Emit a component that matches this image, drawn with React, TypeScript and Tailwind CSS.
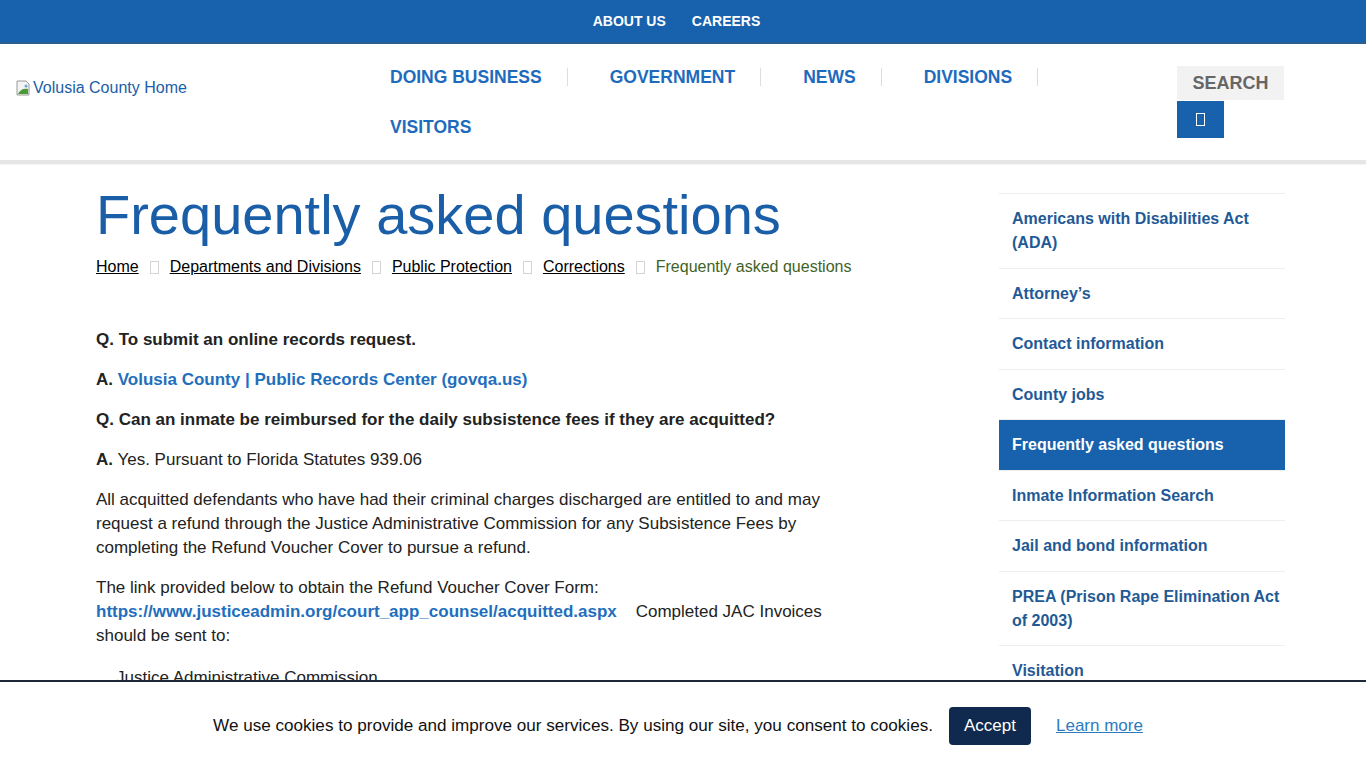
import React from 'react'

const navItems = ['DOING BUSINESS', 'GOVERNMENT', 'NEWS', 'DIVISIONS', 'VISITORS']

const sideLinks = [
  'Americans with Disabilities Act (ADA)',
  'Attorney’s',
  'Contact information',
  'County jobs',
  'Frequently asked questions',
  'Inmate Information Search',
  'Jail and bond information',
  'PREA (Prison Rape Elimination Act of 2003)',
  'Visitation',
  'Volunteer opportunities',
]

const crumbs = ['Home', 'Departments and Divisions', 'Public Protection', 'Corrections']

// missing icon-font glyph, shown as an empty box
const Tofu = ({ className }: { className?: string }) => (
  <span className={`inline-block w-[9px] h-[13px] border border-current ${className ?? ''}`} />
)

const App: React.FC = () => {
  return (
    <div className="min-h-screen bg-white font-['Liberation_Sans',Arial,sans-serif] text-[#333]">
      {/* top utility bar */}
      <div className="h-[44px] bg-[#1761ad] border-b-2 border-[#2b5d8f] flex justify-center items-center gap-[26px] pr-[13px] pt-[1px]">
        <a className="text-white font-bold text-[14px]">ABOUT US</a>
        <a className="text-white font-bold text-[14px]">CAREERS</a>
      </div>

      {/* header */}
      <header className="h-[120px] flex border-b-4 border-[#e6e6e6]">
        <div className="w-[390px] pl-4 pt-[32px]">
          <a className="flex items-center text-[16px] text-[#1a5ea8]">
            <svg width="16" height="16" viewBox="0 0 16 16" className="mr-[1px]">
              <path d="M1 1h9l3 3v11H1z" fill="#f4f4f4" stroke="#9a9a9a" />
              <path d="M2 14c2-4 5-6 10-5v5z" fill="#4c9a36" />
              <circle cx="10" cy="6" r="1.5" fill="#6ba6d6" />
            </svg>
            Volusia County Home
          </a>
        </div>
        <nav className="w-[720px] flex flex-wrap content-start pt-[8px]">
          {navItems.map((item, i) => (
            <div key={item} className="h-[50px] flex items-center">
              <a className={`text-[17.5px] font-bold text-[#1e6bbd] ${i > 0 && i < 4 ? 'ml-[42px]' : ''}`}>{item}</a>
              {i < 4 && <span className="ml-[25px] w-px h-[18px] bg-[#dddddd]" />}
            </div>
          ))}
        </nav>
        <div className="ml-auto mr-[82px] pt-[22px]">
          <div className="w-[107px] h-[34px] bg-[#f2f2f2] flex items-center justify-center text-[18px] font-bold text-[#666]">
            SEARCH
          </div>
          <button className="mt-px w-[47px] h-[37px] bg-[#1761ad] flex items-center justify-center text-white">
            <Tofu />
          </button>
        </div>
      </header>
      <div className="h-px bg-[#f4f4f4]" />

      {/* main */}
      <main className="flex pl-[96px] pt-[20px]">
        <div className="w-[764px]">
          <h1 className="text-[56px] leading-[60px] text-[#1a5ea8]">Frequently asked questions</h1>
          <div className="mt-[10px] flex items-center text-[16px] leading-6">
            {crumbs.map(c => (
              <React.Fragment key={c}>
                <a className="text-black underline">{c}</a>
                <Tofu className="mx-[11px] text-[#d4d4d4] h-[11px] w-[8px]" />
              </React.Fragment>
            ))}
            <span className="text-[#3f6326]">Frequently asked questions</span>
          </div>

          <div className="mt-[49px] w-[760px] text-[17px] leading-6 text-[#222] space-y-4">
            <p className="font-bold">Q. To submit an online records request.</p>
            <p>
              <b>A.</b> <a className="font-bold text-[#1f6fbd]">Volusia County | Public Records Center (govqa.us)</a>
            </p>
            <p className="font-bold">Q. Can an inmate be reimbursed for the daily subsistence fees if they are acquitted?</p>
            <p>
              <b>A.</b> Yes. Pursuant to Florida Statutes 939.06
            </p>
            <p>
              All acquitted defendants who have had their criminal charges discharged are entitled to and may request a refund through the Justice Administrative Commission for any Subsistence Fees by completing the Refund Voucher Cover to pursue a refund.
            </p>
            <p>
              The link provided below to obtain the Refund Voucher Cover Form:
              <br />
              <a className="font-bold text-[#1f6fbd]">https://www.justiceadmin.org/court_app_counsel/acquitted.aspx</a>
              &nbsp;&nbsp;&nbsp; Completed JAC Invoices should be sent to:
            </p>
            <p className="pl-5 pt-[2px]">
              Justice Administrative Commission
              <br />
              Post Office Box 1654
              <br />
              Tallahassee, Florida 32302
            </p>
          </div>
        </div>

        <aside className="ml-[139px] w-[286px] mt-[8px] pb-[120px]">
          <ul className="border-t border-[#eeeeee]">
            {sideLinks.map(link => {
              const active = link === 'Frequently asked questions'
              return (
                <li
                  key={link}
                  className={`pl-[13px] pr-[4px] pt-[13px] pb-[12.5px] text-[16px] leading-6 font-bold border-b border-[#eeeeee] ${
                    active ? 'bg-[#1761ad] text-white' : 'text-[#1f5a96]'
                  }`}
                >
                  {link}
                </li>
              )
            })}
          </ul>
        </aside>
      </main>

      {/* cookie banner */}
      <div className="fixed bottom-0 left-0 right-0 h-[88px] bg-white border-t-2 border-[#1d2838] flex items-center justify-center pr-[10px] pt-[2px]">
        <span className="text-[17.1px] text-[#111]">
          We use cookies to provide and improve our services. By using our site, you consent to cookies.
        </span>
        <button className="ml-[16px] w-[82px] h-[38px] rounded-[4px] bg-[#0f2a4e] text-white text-[17px]">Accept</button>
        <a className="ml-[25px] text-[17px] text-[#2c7bbf] underline">Learn more</a>
      </div>
    </div>
  )
}

export default App
